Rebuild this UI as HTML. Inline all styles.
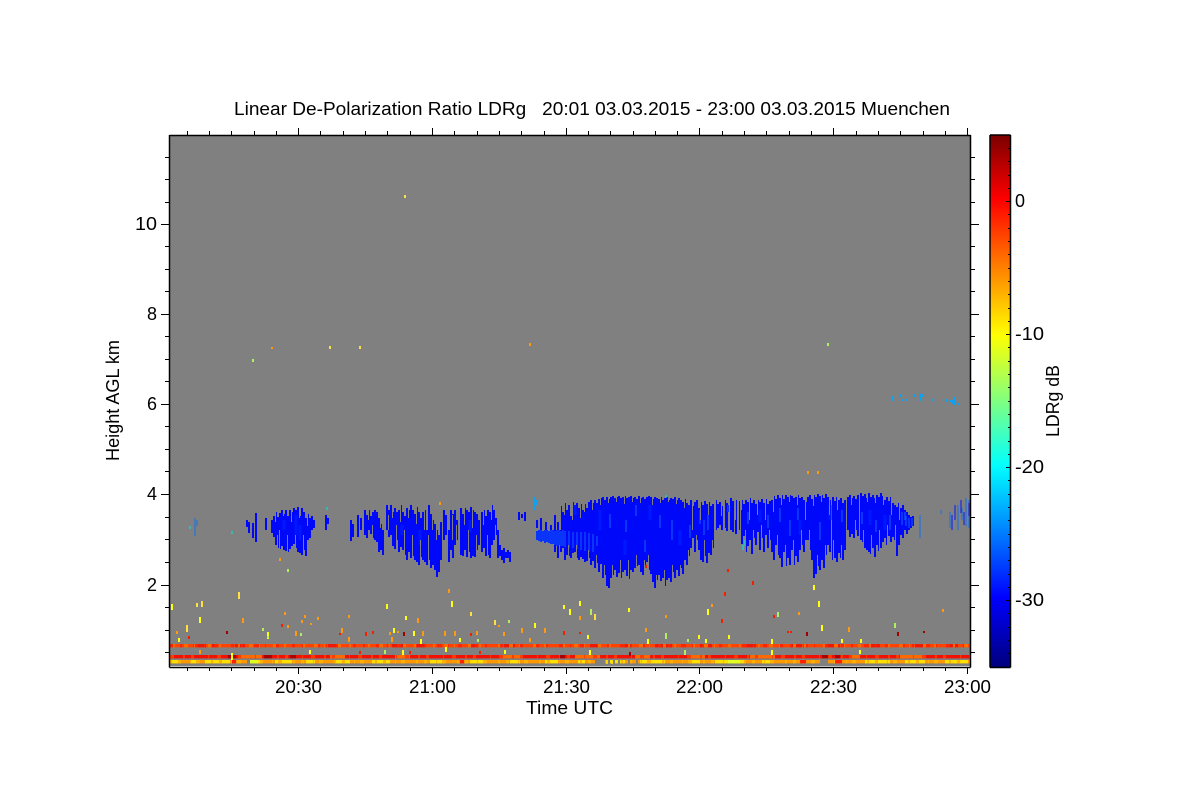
<!DOCTYPE html>
<html><head><meta charset="utf-8"><title>LDRg</title>
<style>
html,body{margin:0;padding:0;background:#fff;width:1200px;height:800px;overflow:hidden}
svg{display:block}
text{font-family:"Liberation Sans",sans-serif;fill:#000;white-space:pre}
.a{fill:none;stroke:#000;stroke-width:1.5}
.c path,.s path{fill:none;shape-rendering:crispEdges}
.b path{fill:none}
</style></head><body>
<svg width="1200" height="800" viewBox="0 0 1200 800" xmlns="http://www.w3.org/2000/svg">
<defs><linearGradient id="g" x1="0" y1="0" x2="0" y2="1">
<stop offset="0" stop-color="#7c0000"/><stop offset=".122" stop-color="#ff0000"/><stop offset=".376" stop-color="#ffff00"/><stop offset=".5" stop-color="#80ff80"/><stop offset=".622" stop-color="#00ffff"/><stop offset=".87" stop-color="#0000ff"/><stop offset="1" stop-color="#00007c"/>
</linearGradient></defs>
<rect x="170" y="135" width="800" height="531" fill="#808080"/>

<g class="c">
<path stroke="#0008fa" stroke-width="2" d="M247 520V527M249 522V533M253 523V538M256 513V542M266 518V530M272 520V533M274 516V537M276 512V545M278 517V548M280 513V549M282 510V546M284 514V550M286 510V551M288 516V552M290 510V549M292 512V546M294 508V544M296 510V548M298 507V552M300 516V553M302 508V555M304 512V550M306 518V556M308 514V540M310 518V538M312 516V530M314 520V528M326 515V530M328 518V524M351 520V541M353 524V537M358 515V537M361 518V530M365 510V535M367 515V538M369 510V530M371 516V534M373 512V538M375 510V540M377 512V542M379 518V552M381 524V550M383 530V555M387 505V530M389 510V537M391 505V535M393 512V546M395 508V549M397 512V540M399 510V552M401 505V547M403 512V550M405 516V555M407 508V560M409 510V552M411 505V558M413 510V556M415 514V560M417 507V562M419 512V565M421 518V557M423 512V560M425 510V562M427 530V565M429 505V560M431 514V568M433 520V565M435 524V570M437 530V577M439 535V572M441 522V560M444 510V540M446 515V535M449 530V562M451 510V550M453 514V558M455 510V545M457 520V540M461 508V555M463 514V556M465 508V550M467 510V557M469 512V552M471 507V558M473 510V556M475 512V557M477 514V550M479 520V545M482 512V552M484 510V548M486 516V556M488 510V555M490 512V558M492 505V545M494 510V540M496 518V535M498 530V558M500 545V556M502 550V560M504 548V563M506 552V558M508 550V558M510 552V562M519 512V520M522 514V518M525 512V521M537 520V528M541 518V534M546 522V530M551 525V535M555 515V552M558 522V558M561 506V552M563 512V548M565 503V560M567 510V555M569 505V556M571 516V558M573 502V553M575 512V552M577 503V558M579 508V560M581 504V557M583 510V559M585 504V562M587 508V561M589 502V558M591 500V565M593 503V561M595 500V568M597 503V563M599 499V572M601 498V564M603 497V578M605 500V575M607 497V586M609 499V588M611 497V578M613 496V575M615 498V570M617 497V577M619 496V573M621 498V578M623 497V572M625 496V570M627 498V576M629 497V579M631 496V570M633 498V572M635 497V568M637 499V566M639 496V565M641 498V572M643 497V575M645 499V568M647 497V562M649 496V570M651 497V574M653 499V582M655 497V588M657 498V580M659 499V575M661 497V581M663 500V578M665 498V586M667 497V580M669 500V578M671 498V582M673 499V572M675 497V578M677 500V570M679 498V576M681 500V568M683 502V574M685 499V560M687 503V565M689 505V556M691 500V548M693 506V538M695 502V552M697 500V540M699 508V550M701 502V560M703 505V562M705 501V556M707 504V563M709 502V553M711 506V555M713 504V548M716 500V530M718 504V528M720 502V525M722 506V530M725 500V528M727 503V531M731 498V530M733 501V532M736 500V534M739 501V530M742 500V544M744 504V536M746 500V552M748 502V546M750 498V540M752 503V554M754 500V538M756 504V545M758 500V532M760 502V550M762 499V538M764 503V552M766 499V535M768 504V548M770 501V540M772 500V552M774 496V560M776 499V545M778 495V555M780 498V558M782 495V567M784 499V552M786 495V566M788 497V558M790 495V565M792 496V550M794 498V565M796 497V556M798 495V562M800 498V550M802 497V545M804 500V552M806 502V540M808 497V540M810 495V550M812 499V560M814 495V578M816 497V574M818 494V566M820 496V570M822 495V560M824 498V568M826 494V555M828 497V545M830 500V552M833 497V560M835 501V558M837 497V562M839 500V553M841 498V558M843 503V560M845 500V550M848 497V530M850 495V537M852 498V534M854 496V538M856 499V530M858 495V536M861 493V540M863 496V542M865 494V548M867 498V550M869 493V552M871 497V554M873 495V548M875 498V557M877 495V545M879 497V551M881 493V548M883 496V542M885 500V538M887 497V545M889 501V536M891 497V542M893 503V537M895 505V540M897 507V556M899 503V545M901 508V535M903 505V538M905 510V530M907 512V534M909 515V530M911 517V528M913 516V526"/>
<path stroke="#0a34fa" stroke-width="2" d="M537 531V540M539 530V541M541 530V542M543 531V541M545 530V543M547 530V542M549 531V543M551 530V544M553 530V544M555 531V545M557 530V546M559 530V545M561 531V546M563 530V546M565 531V547M569 531V548M573 532V548M577 532V549M581 532V550M585 532V551M589 533V552M593 534V552M597 536V546M610 514V528M626 520V532M636 505V516M645 540V552M660 515V528M672 520V540M690 525V538M700 510V524M704 520V535M708 515V530M728 505V512M748 512V524M768 515V528M780 508V522M790 520V536M798 508V520M820 522V540M842 510V522M862 512V524M876 520V532M890 515V530M902 512V525M906 516V526M909 518V528M912 518V526"/>
<path stroke="#0018ff" stroke-width="3" d="M284 520V530M296 515V535M300 525V540M402 525V535M420 530V545M470 520V532M575 505V515M600 510V530M625 540V555M650 505V520M680 530V545M760 510V522M800 520V535M830 505V520M870 510V525M885 515V530"/>
<path stroke="#1070f0" stroke-width="1.4" d="M195 518V536M197 520V526M905 512V520M920 515V538M941 510V514M950 512V528M958 505V530M962 508V520M966 498V526M969 500V528"/>
<path stroke="#0818f8" stroke-width="1.4" d="M952 515V530M955 505V520M961 500V513M964 512V525M969 503V516"/>
<path stroke="#10a0f0" stroke-width="1.6" d="M535 497V510M537 500V505M893 396V401M900 394V397M903 399V401M906 399V401M915 394V397M920 394V401M923 394V397M932 399V401M946 399V402M951 400V402M953 400V404M955 397V405M959 403V405"/>
<path stroke="#00e8e0" stroke-width="1.4" d="M190 526V529M232 531V534M327 507V510M666 495V498M743 545V550M745 540V546"/>
<path stroke="#808080" stroke-width="1" d="M275.500 505V522M279.500 530V560M283.500 505V516M287.500 535V560M291.500 505V522M295.500 535V560M299.500 505V518M303.500 535V560M307.500 505V526M277.500 535V550M368.500 505V520M372.500 525V540M380.500 510V528M388.500 515V530M392.500 500V518M396.500 525V555M400.500 500V522M404.500 530V560M408.500 500V518M412.500 535V565M416.500 500V524M420.500 540V570M424.500 500V530M428.500 535V570M432.500 505V530M436.500 500V540M442.500 530V565M452.500 515V540M456.500 525V550M464.500 500V525M468.500 530V562M472.500 505V528M476.500 535V562M483.500 500V525M487.500 535V560M491.500 505V520M495.500 525V545M560.500 500V530M564.500 500V515M568.500 545V562M572.500 500V520M576.500 545V562M580.500 500V518M584.500 500V512M588.500 550V566M592.500 500V510M596.500 555V572M600.500 490V505M604.500 565V590M608.500 490V503M612.500 565V590M616.500 490V502M620.500 560V590M624.500 490V504M628.500 560V590M632.500 490V502M636.500 555V590M640.500 490V503M644.500 560V590M648.500 555V590M652.500 490V505M656.500 575V595M660.500 490V503M664.500 570V595M668.500 490V502M672.500 565V595M676.500 490V504M680.500 565V595M684.500 490V508M688.500 550V570M692.500 495V530M696.500 535V560M700.500 495V520M704.500 540V570M708.500 495V515M712.500 540V560M715.500 490V535M721.500 495V516M724.500 490V535M729.500 490V535M735.500 495V520M738.500 490V535M741.500 495V510M745.500 530V560M749.500 495V520M753.500 530V560M757.500 495V515M761.500 525V560M765.500 495V520M769.500 530V560M773.500 495V512M777.500 535V570M781.500 490V505M785.500 545V570M789.500 490V502M793.500 540V570M797.500 490V505M801.500 530V570M805.500 495V520M809.500 530V570M813.500 490V506M817.500 555V585M821.500 490V502M825.500 545V575M829.500 495V515M833.500 540V565M837.500 490V510M841.500 545V565M846.500 490V560M851.500 490V505M855.500 520V545M859.500 490V508M863.500 530V550M867.500 490V502M871.500 535V560M875.500 490V503M879.500 530V560M883.500 490V505M887.500 525V550M891.500 495V515M895.500 525V545M899.500 500V520"/>
</g>

<g class="b">
<path stroke="#ff4200" stroke-width="3.400" d="M170 645.700H970"/>
<path stroke="#f01800" stroke-width="3.400" d="M197 645.700H206M212 645.700H218M235 645.700H245M328 645.700H340M392 645.700H404M415 645.700H424M470 645.700H478M504 645.700H515M590 645.700H600M622 645.700H632M655 645.700H672M700 645.700H712M742 645.700H756M790 645.700H802M825 645.700H840M868 645.700H880M915 645.700H925M948 645.700H958"/>
<path stroke="#ff2400" stroke-width="3.400" stroke-dasharray="3 7 2 11 5 6 1 9 4 13" d="M170 645.700H970"/>
<path stroke="#ff6a00" stroke-width="3.400" stroke-dasharray="2 9 4 6 1 13 3 8 2 17" d="M173 645.700H970"/>
<path stroke="#f21000" stroke-width="3.400" d="M170 656.700H970"/>
<path stroke="#ff6a00" stroke-width="3.400" d="M238 656.700H262M330 656.700H345M395 656.700H410M500 656.700H520M575 656.700H600M635 656.700H650M690 656.700H705M750 656.700H775M850 656.700H860M900 656.700H925"/>
<path stroke="#ff3a00" stroke-width="3.400" stroke-dasharray="4 9 2 6 3 14 1 8" d="M170 656.700H970"/>
<path stroke="#a80000" stroke-width="3.400" d="M228 656.700H236M264 656.700H272M290 656.700H296M560 656.700H565M822 656.700H828M835 656.700H840"/>
<path stroke="#ff9800" stroke-width="3.400" d="M170 661.700H595M605 661.700H820M828 661.700H970"/>
<path stroke="#ffe000" stroke-width="3.400" d="M172 661.700H180M190 661.700H197M205 661.700H230M248 661.700H262M275 661.700H292M306 661.700H315M335 661.700H350M372 661.700H390M430 661.700H445M470 661.700H484M510 661.700H520M545 661.700H558M578 661.700H585M610 661.700H625M640 661.700H665M690 661.700H700M715 661.700H745M762 661.700H770M865 661.700H890M905 661.700H925M945 661.700H968"/>
<path stroke="#ffb000" stroke-width="3.400" stroke-dasharray="2 6 3 9 1 5 4 11" d="M170 661.700H970"/>
<path stroke="#e0ff20" stroke-width="3.400" d="M248 661.700H258M728 661.700H740"/>
<path stroke="#ff2000" stroke-width="3.400" d="M232 661.700H236M460 661.700H464M800 661.700H806M835 661.700H842"/>
<path stroke="#808080" stroke-width="3.600" d="M247 661.700H250M596 661.700H605M608 661.700H610M613 661.700H615M618 661.700H620M628 661.700H630M636 661.700H638M820 661.700H828"/>
<path stroke="#ffe000" stroke-width="1.500" d="M607 660V664M612 660V664"/>
</g>

<g class="s">
<path stroke="#ffff10" stroke-width="1.600" d="M172 604V610M179 638V642M200 617V623M268 632V639M387 604V609M406 616V620M394 628V633M414 631V636M421 639V644M452 601V607M460 638V642M535 623V628M564 605V609M580 601V606M570 609V615M588 635V639M629 608V612M648 639V644M708 609V615M699 635V639M706 639V643M729 635V639M772 639V644M814 585V590M819 601V607M822 625V631M842 639V643M861 639V643M310 650V654M403 650V655M505 650V654M590 650V655M772 650V655M860 650V654M232 653V660M446 647V652"/>
<path stroke="#ffe040" stroke-width="1.600" d="M197 603V607M239 592V599M187 625V632M202 601V607M471 612V616M495 620V625M330 346V349M360 346V349M405 195V198M595 614V620"/>
<path stroke="#b0f060" stroke-width="1.600" d="M263 628V631M268 636V638M301 633V636M478 639V642M509 620V623M591 609V615M666 633V639M688 639V642M778 612V617M895 623V628M288 569V572M828 343V346M253 359V362M385 650V654M685 650V655"/>
<path stroke="#ff9a10" stroke-width="1.600" d="M243 618V623M177 631V634M285 612V615M288 625V628M302 620V623M305 615V618M311 623V625M318 617V620M296 631V636M349 615V618M342 628V633M349 637V642M390 632V635M392 637V642M398 631V633M418 618V623M423 631V636M449 589V593M445 631V636M455 631V636M477 631V635M499 625V627M504 632V636M522 628V633M545 628V633M530 638V642M580 616V620M646 628V632M666 615V618M712 604V607M799 612V615M849 627V632M943 609V612M280 558V561M440 502V505M530 343V346M808 471V474M818 471V474M272 347V349M200 650V654"/>
<path stroke="#f02000" stroke-width="1.600" d="M189 636V639M282 624V627M340 633V635M366 632V636M373 631V634M471 633V636M725 592V596M722 619V623M728 569V572M753 581V585M774 615V618M788 631V633M791 631V633M564 631V635M580 632V634M360 651V654M410 651V654M480 651V654M646 565V568"/>
<path stroke="#a00000" stroke-width="1.600" d="M227 631V634M404 632V636M807 632V636M898 632V636M924 631V633M630 652V656"/>
</g>

<rect x="990" y="135" width="20" height="532" fill="url(#g)"/>
<path class="a" d="M990 135V667.500M1010.500 135V667.500M990 135H1010.500M990 667.500H1010.500"/>
<path fill="none" stroke="#000" stroke-width="1" d="M1008 148.500H1010M1008 161.500H1010M1008 175.500H1010M1008 188.500H1010M1006 201.500H1010M1008 214.500H1010M1008 228.500H1010M1008 241.500H1010M1008 254.500H1010M1008 268.500H1010M1008 281.500H1010M1008 294.500H1010M1008 308.500H1010M1008 321.500H1010M1006 334.500H1010M1008 347.500H1010M1008 361.500H1010M1008 374.500H1010M1008 387.500H1010M1008 401.500H1010M1008 414.500H1010M1008 427.500H1010M1008 441.500H1010M1008 454.500H1010M1006 467.500H1010M1008 480.500H1010M1008 494.500H1010M1008 507.500H1010M1008 520.500H1010M1008 534.500H1010M1008 547.500H1010M1008 560.500H1010M1008 574.500H1010M1008 587.500H1010M1006 600.500H1010M1008 613.500H1010M1008 627.500H1010M1008 640.500H1010M1008 653.500H1010"/>

<path class="a" d="M169.500 135V667.500M970.500 135V667.500M169.500 135.500H970.500M169.500 667.500H970.500"/>
<path fill="none" stroke="#000" stroke-width="1" d="M187.500 131V135M209.500 131V135M231.500 131V135M254.500 131V135M276.500 131V135M298.500 128V135M320.500 131V135M343.500 131V135M365.500 131V135M387.500 131V135M410.500 131V135M432.500 128V135M454.500 131V135M477.500 131V135M499.500 131V135M521.500 131V135M544.500 131V135M566.500 128V135M588.500 131V135M610.500 131V135M633.500 131V135M655.500 131V135M677.500 131V135M699.500 128V135M722.500 131V135M744.500 131V135M766.500 131V135M789.500 131V135M811.500 131V135M833.500 128V135M856.500 131V135M878.500 131V135M900.500 131V135M923.500 131V135M945.500 131V135M967.500 128V135"/>
<path fill="none" stroke="#000" stroke-width="1" d="M187.500 668V671M209.500 668V671M231.500 668V671M254.500 668V671M276.500 668V671M298.500 668V674M320.500 668V671M343.500 668V671M365.500 668V671M387.500 668V671M410.500 668V671M432.500 668V674M454.500 668V671M477.500 668V671M499.500 668V671M521.500 668V671M544.500 668V671M566.500 668V674M588.500 668V671M610.500 668V671M633.500 668V671M655.500 668V671M677.500 668V671M699.500 668V674M722.500 668V671M744.500 668V671M766.500 668V671M789.500 668V671M811.500 668V671M833.500 668V674M856.500 668V671M878.500 668V671M900.500 668V671M923.500 668V671M945.500 668V671M967.500 668V674"/>
<path fill="none" stroke="#000" stroke-width="1" d="M165 157.500H169M165 179.500H169M165 202.500H169M161 224.500H169M165 246.500H169M165 269.500H169M165 291.500H169M161 314.500H169M165 336.500H169M165 359.500H169M165 381.500H169M161 404.500H169M165 426.500H169M165 449.500H169M165 471.500H169M161 494.500H169M165 517.500H169M165 539.500H169M165 562.500H169M161 585.500H169M165 607.500H169M165 630.500H169M165 652.500H169"/>
<path fill="none" stroke="#000" stroke-width="1" d="M971 157.500H975M971 179.500H975M971 202.500H975M971 224.500H979M971 246.500H975M971 269.500H975M971 291.500H975M971 314.500H979M971 336.500H975M971 359.500H975M971 381.500H975M971 404.500H979M971 426.500H975M971 449.500H975M971 471.500H975M971 494.500H979M971 517.500H975M971 539.500H975M971 562.500H975M971 585.500H979M971 607.500H975M971 630.500H975M971 652.500H975"/>

<text x="234" y="115" font-size="18" textLength="716" lengthAdjust="spacingAndGlyphs">Linear De-Polarization Ratio LDRg   20:01 03.03.2015 - 23:00 03.03.2015 Muenchen</text>
<g font-size="18">
<text x="135" y="230" textLength="22" lengthAdjust="spacingAndGlyphs">10</text>
<text x="147" y="320" textLength="10" lengthAdjust="spacingAndGlyphs">8</text>
<text x="147" y="410" textLength="10" lengthAdjust="spacingAndGlyphs">6</text>
<text x="147" y="500" textLength="10" lengthAdjust="spacingAndGlyphs">4</text>
<text x="147" y="591" textLength="10" lengthAdjust="spacingAndGlyphs">2</text>
<text x="275" y="693" textLength="47" lengthAdjust="spacingAndGlyphs">20:30</text>
<text x="409" y="693" textLength="47" lengthAdjust="spacingAndGlyphs">21:00</text>
<text x="543" y="693" textLength="47" lengthAdjust="spacingAndGlyphs">21:30</text>
<text x="676" y="693" textLength="47" lengthAdjust="spacingAndGlyphs">22:00</text>
<text x="810" y="693" textLength="47" lengthAdjust="spacingAndGlyphs">22:30</text>
<text x="944" y="693" textLength="47" lengthAdjust="spacingAndGlyphs">23:00</text>
<text x="526" y="714" textLength="87" lengthAdjust="spacingAndGlyphs">Time UTC</text>
<text x="1015" y="207" textLength="10" lengthAdjust="spacingAndGlyphs">0</text>
<text x="1015" y="340" textLength="29" lengthAdjust="spacingAndGlyphs">-10</text>
<text x="1015" y="473" textLength="29" lengthAdjust="spacingAndGlyphs">-20</text>
<text x="1015" y="606" textLength="29" lengthAdjust="spacingAndGlyphs">-30</text>
<text transform="translate(119 461) rotate(-90)" textLength="121" lengthAdjust="spacingAndGlyphs">Height AGL km</text>
<text transform="translate(1059 437) rotate(-90)" textLength="72" lengthAdjust="spacingAndGlyphs">LDRg dB</text>
</g>
</svg>
</body></html>
